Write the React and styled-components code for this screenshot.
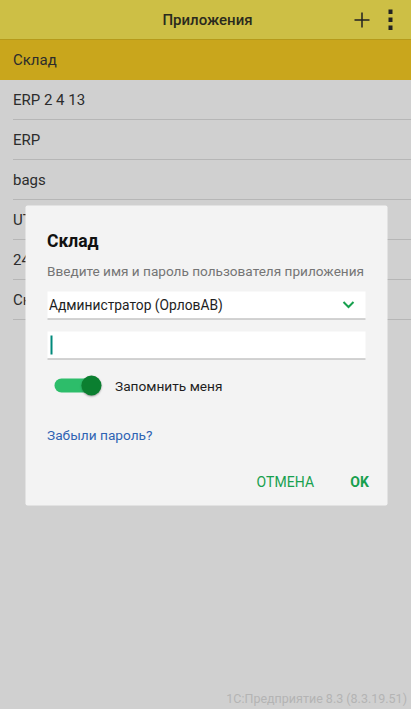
import React from "react";
import styled, { createGlobalStyle } from "styled-components";

const Global = createGlobalStyle`
  html, body { margin: 0; padding: 0; }
  body { font-family: Roboto, "Noto Sans", sans-serif; background: #d0d0d0; }
`;

const Page = styled.div`
  position: relative;
  height: 709px;
  display: flex;
  flex-direction: column;
  background: #d0d0d0;
  overflow: hidden;
`;

const Header = styled.div`
  height: 39px;
  border-bottom: 1px solid #b69a1a;
  background: #cdbf45;
  display: grid;
  grid-template-columns: 1fr auto 1fr;
  align-items: center;
`;

const Title = styled.div`
  grid-column: 2;
  font-size: 15px;
  font-weight: 500;
  color: #2a2a1e;
  transform: translateX(2px);
`;

const Actions = styled.div`
  grid-column: 3;
  justify-self: end;
  display: flex;
  align-items: center;
  gap: 18px;
  padding-right: 18px;
`;

const List = styled.div`
  display: flex;
  flex-direction: column;
`;

const Row = styled.div`
  height: 40px;
  display: flex;
  align-items: center;
  padding-left: 13px;
  font-size: 15px;
  color: #2c2c2c;
  background: ${(p) => (p.$selected ? "#c9a61c" : "transparent")};
  position: relative;
  &::after {
    content: "";
    position: absolute;
    left: 13px;
    right: 0;
    bottom: 0;
    height: 1px;
    background: ${(p) => (p.$selected ? "transparent" : "#b6b6b6")};
  }
`;

const Spacer = styled.div`
  flex: 1;
`;

const Footer = styled.div`
  text-align: right;
  padding: 0 4px 3px 0;
  font-size: 12.5px;
  color: #b4b4b4;
`;

const Overlay = styled.div`
  position: absolute;
  inset: 0;
  display: flex;
  align-items: center;
  justify-content: center;
`;

const Dialog = styled.div`
  width: 362px;
  box-sizing: border-box;
  background: #f3f3f3;
  border-radius: 2px;
  padding: 24px 22px 0 22px;
  display: flex;
  flex-direction: column;
  transform: translate(0.5px, 0.5px);
`;

const DTitle = styled.div`
  font-size: 17.5px;
  font-weight: 700;
  line-height: 22px;
  color: #111;
`;

const DSub = styled.div`
  margin-top: 9px;
  font-size: 13.6px;
  line-height: 20px;
  white-space: nowrap;
  color: #757575;
`;

const Field = styled.div`
  margin-top: ${(p) => p.$mt}px;
  height: 27px;
  background: #fff;
  border-bottom: 1px solid #a8a8a8;
  display: flex;
  align-items: center;
  padding: 0 2px;
  font-size: 13.8px;
  color: #1e1e1e;
`;

const FieldText = styled.div`
  flex: 1;
`;

const Caret = styled.div`
  width: 2px;
  height: 19px;
  background: #00897b;
  margin-left: 1px;
`;

const ToggleRow = styled.div`
  margin-top: 13px;
  height: 26px;
  display: flex;
  align-items: center;
  padding-left: 7px;
  gap: 15px;
  font-size: 13.7px;
  color: #1e1e1e;
`;

const Track = styled.div`
  position: relative;
  width: 46px;
  height: 14px;
  border-radius: 7px;
  background: #2dbd6a;
`;

const Thumb = styled.div`
  position: absolute;
  right: -1px;
  top: -3px;
  width: 20px;
  height: 20px;
  border-radius: 50%;
  background: #0b7f30;
  box-shadow: 0 1px 2px rgba(0, 0, 0, 0.35);
`;

const Link = styled.div`
  margin-top: 26px;
  font-size: 13.7px;
  line-height: 20px;
  color: #2f63b3;
`;

const Buttons = styled.div`
  margin-top: 17px;
  height: 40px;
  display: flex;
  justify-content: flex-end;
  align-items: center;
  gap: 36px;
  margin-right: -4px;
  margin-bottom: 4px;
`;

const Btn = styled.div`
  font-size: 14px;
  font-weight: ${(p) => (p.$strong ? 700 : 400)};
  color: #17a04e;
  letter-spacing: 0.1px;
`;

export default function App() {
  const items = ["ERP 2 4 13", "ERP", "bags", "UT 11", "24", "Склад 2"];
  return (
    <>
      <Global />
      <Page>
        <Header>
          <Title>Приложения</Title>
          <Actions>
            <svg width="16" height="16" viewBox="0 0 16 16">
              <path d="M8 0.5v15M0.5 8h15" stroke="#222" strokeWidth="1.5" />
            </svg>
            <svg width="5" height="22" viewBox="0 0 5 22">
              <rect x="0.5" y="0.5" width="4" height="4.5" fill="#222" />
              <rect x="0.5" y="8.5" width="4" height="4.5" fill="#222" />
              <rect x="0.5" y="16.5" width="4" height="4.5" fill="#222" />
            </svg>
          </Actions>
        </Header>
        <List>
          <Row $selected>Склад</Row>
          {items.map((t) => (
            <Row key={t}>{t}</Row>
          ))}
        </List>
        <Spacer />
        <Footer>1С:Предприятие 8.3 (8.3.19.51)</Footer>
        <Overlay>
          <Dialog>
            <DTitle>Склад</DTitle>
            <DSub>Введите имя и пароль пользователя приложения</DSub>
            <Field $mt={11}>
              <FieldText>Администратор (ОрловАВ)</FieldText>
              <svg width="14" height="10" viewBox="0 0 14 10" style={{ marginRight: 8 }}>
                <path d="M2 2.5l5 5 5-5" stroke="#17a04e" strokeWidth="2" fill="none" />
              </svg>
            </Field>
            <Field $mt={12}>
              <Caret />
            </Field>
            <ToggleRow>
              <Track>
                <Thumb />
              </Track>
              <span>Запомнить меня</span>
            </ToggleRow>
            <Link>Забыли пароль?</Link>
            <Buttons>
              <Btn>ОТМЕНА</Btn>
              <Btn $strong>OK</Btn>
            </Buttons>
          </Dialog>
        </Overlay>
      </Page>
    </>
  );
}
